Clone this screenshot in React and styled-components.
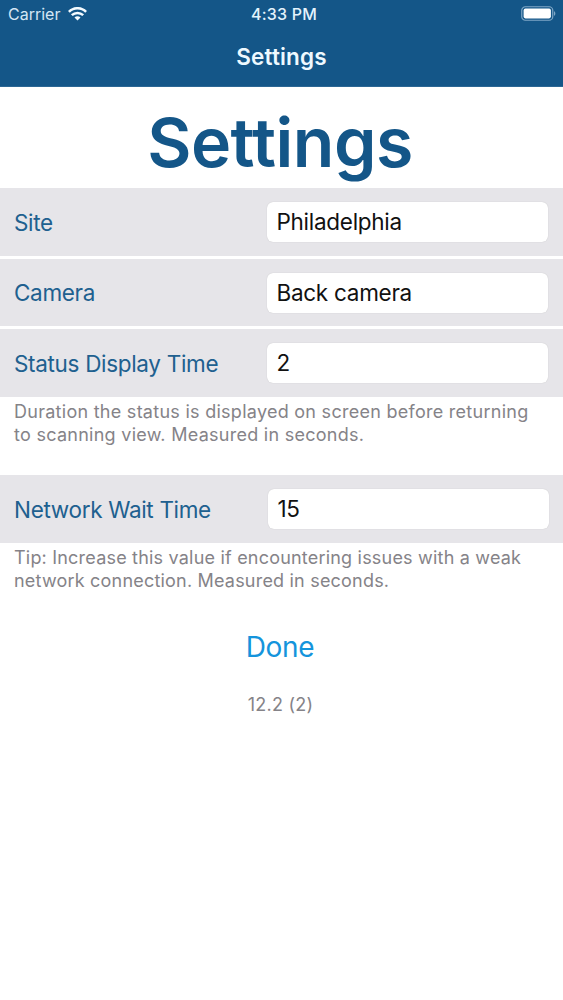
import React from 'react';
import styled, { createGlobalStyle } from 'styled-components';

const GlobalStyle = createGlobalStyle`
  *, *::before, *::after { box-sizing: border-box; }
  body {
    margin: 0;
    background: #fff;
    font-family: Inter, "Liberation Sans", sans-serif;
  }
`;

const Screen = styled.div`
  display: flex;
  flex-direction: column;
  min-height: 1000px;
  background: #fff;
`;

const Header = styled.header`
  height: 87px;
  background: #145688;
  border-bottom: 1px solid #2c6794;
`;

const StatusBar = styled.div`
  display: grid;
  grid-template-columns: 1fr auto 1fr;
  align-items: center;
  height: 29px;
  padding: 0 7px 0 8px;
  font-size: 16px;
  line-height: 29px;
`;

const Carrier = styled.div`
  display: flex;
  align-items: center;
  gap: 8px;
  color: #d3e6f5;

  svg {
    margin-bottom: 1px;
  }
`;

const Clock = styled.div`
  color: #e4f3fd;
  font-weight: 500;
  letter-spacing: 0.2px;
  padding-left: 4px;
`;

const BatterySlot = styled.div`
  display: flex;
  justify-content: flex-end;
  padding-bottom: 2px;
`;

const NavTitle = styled.div`
  height: 57px;
  line-height: 56px;
  text-align: center;
  color: #eef9ff;
  font-size: 22.5px;
  font-weight: 600;
  letter-spacing: 0.15px;
`;

const PageTitle = styled.h1`
  margin: 0;
  height: 101px;
  padding: 5px 3px 0 0;
  line-height: 101px;
  text-align: center;
  color: #145688;
  font-size: 68px;
  font-weight: 600;
  letter-spacing: -0.5px;
`;

const Group = styled.section`
  display: flex;
  flex-direction: column;
  gap: 3px;
`;

const Row = styled.label`
  display: flex;
  align-items: center;
  justify-content: space-between;
  height: ${({ $height }) => $height || 68}px;
  padding: 0 ${({ $inset }) => $inset || 15}px 0 14px;
  background: #e6e5e9;
`;

const RowLabel = styled.span`
  color: #20608f;
  font-size: 22.5px;
  letter-spacing: -0.32px;
`;

const Field = styled.span`
  width: 281px;
  height: 40px;
  padding-left: 9.5px;
  border-radius: 6px;
  background: #fff;
  box-shadow: 0 0 1px rgba(0, 0, 0, 0.2);
  color: #111;
  font-size: 22.5px;
  line-height: 39px;
  letter-spacing: -0.28px;
`;

const Note = styled.p`
  margin: 0;
  height: ${({ $height }) => $height}px;
  padding: 4px 14px 0;
  color: #858388;
  font-size: 18px;
  line-height: 22.7px;
  letter-spacing: ${({ $tracking }) => $tracking}px;
  white-space: nowrap;
`;

const DoneButton = styled.button`
  align-self: center;
  height: 40px;
  margin: 1px 3px 0 0;
  padding: 0;
  border: 0;
  background: none;
  color: #1494dc;
  font: inherit;
  font-size: 28px;
  line-height: 40px;
  letter-spacing: -0.3px;
`;

const Version = styled.div`
  padding: 26px 2px 0 0;
  text-align: center;
  color: #858388;
  font-size: 18px;
  line-height: 24px;
  letter-spacing: 0.25px;
`;

const WifiIcon = () => (
  <svg width="19" height="14" viewBox="0 0 19 14" fill="none" stroke="#f4fbff" strokeWidth="2.5">
    <path d="M0.9 4.9C5.8 0 13.2 0 18.1 4.9" />
    <path d="M3.8 8.2C7.1 5.1 11.9 5.1 15.2 8.2" />
    <path d="M6.5 10.5C8.2 8.9 10.8 8.9 12.5 10.5L9.5 13.6Z" fill="#f4fbff" stroke="none" />
  </svg>
);

const BatteryIcon = () => (
  <svg width="35" height="15" viewBox="0 0 35 15">
    <rect x="0.75" y="0.75" width="31" height="13.5" rx="3.6" fill="none" stroke="#7fa7c6" strokeWidth="1.2" />
    <rect x="2.6" y="2.6" width="27.3" height="9.8" rx="1.8" fill="#fff" />
    <path d="M33 5.2C34.8 5.8 34.8 9.2 33 9.8Z" fill="#7fa7c6" />
  </svg>
);

export default function App() {
  return (
    <Screen>
      <GlobalStyle />
      <Header>
        <StatusBar>
          <Carrier>
            Carrier
            <WifiIcon />
          </Carrier>
          <Clock>4:33 PM</Clock>
          <BatterySlot>
            <BatteryIcon />
          </BatterySlot>
        </StatusBar>
        <NavTitle>Settings</NavTitle>
      </Header>
      <PageTitle>Settings</PageTitle>
      <Group>
        <Row>
          <RowLabel>Site</RowLabel>
          <Field>Philadelphia</Field>
        </Row>
        <Row $height={67}>
          <RowLabel>Camera</RowLabel>
          <Field>Back camera</Field>
        </Row>
        <Row>
          <RowLabel>Status Display Time</RowLabel>
          <Field>2</Field>
        </Row>
      </Group>
      <Note $height={78} $tracking={0.27}>
        Duration the status is displayed on screen before returning
        <br />
        to scanning view. Measured in seconds.
      </Note>
      <Row $inset={14}>
        <RowLabel>Network Wait Time</RowLabel>
        <Field>15</Field>
      </Row>
      <Note $height={83} $tracking={0.2}>
        Tip: Increase this value if encountering issues with a weak
        <br />
        network connection. Measured in seconds.
      </Note>
      <DoneButton type="button">Done</DoneButton>
      <Version>12.2 (2)</Version>
    </Screen>
  );
}
